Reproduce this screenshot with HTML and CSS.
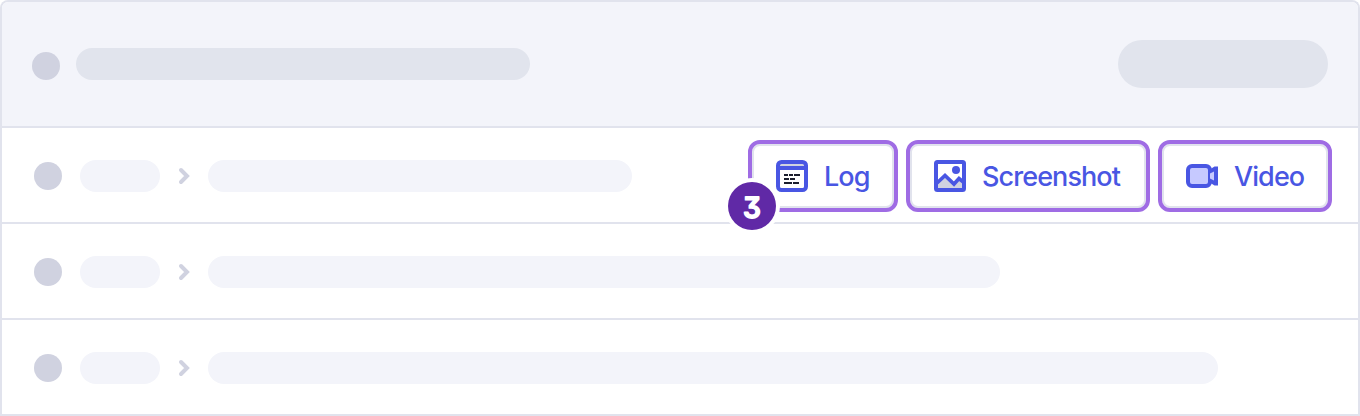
FILE: index.html
```html
<!DOCTYPE html>
<html lang="en">
<head>
<meta charset="utf-8">
<title>Test results</title>
<link rel="stylesheet" href="styles.css">
</head>
<body>
<main class="panel">
  <header class="panel-header">
    <span class="dot"></span>
    <span class="bar bar-title"></span>
    <span class="bar bar-action"></span>
  </header>
  <section class="row">
    <span class="dot"></span>
    <span class="bar tag"></span>
    <svg class="chevron" width="12" height="18" viewBox="0 0 12 18"><path d="M3 3l6 6-6 6"/></svg>
    <span class="bar name-1"></span>
    <div class="actions">
      <button class="action action-log">
        <svg width="32" height="32" viewBox="0 0 32 32">
          <rect x="2" y="2" width="28" height="28" rx="3" fill="#fff"/>
          <path fill="#d0d2e0" d="M4 4h24v2H4z"/>
          <path fill="#4956e3" d="M4 6h24v4H4z"/>
          <rect x="2" y="2" width="28" height="28" rx="3.500" fill="none" stroke="#4956e3" stroke-width="4"/>
          <path d="M8 15h4m1 0h4m1 0h6M8 19h5m1 0h5M8 23h8m1 0h6" fill="none" stroke="#1b1e2e" stroke-width="2"/>
        </svg>
        <span class="label">Log</span>
        <svg class="badge" width="48" height="48" viewBox="0 0 48 48"><text x="24" y="35.500">3</text></svg>
      </button>
      <button class="action action-screenshot">
        <svg width="32" height="32" viewBox="0 0 32 32">
          <path d="M4 23l7-6.500 9 8.500 5-5 3 2v6H4z" fill="#d0d2e0"/>
          <path d="M3 23l8-7.500 9 8.500 5-5.500 5 4" fill="none" stroke="#4956e3" stroke-width="3.700"/>
          <circle cx="22" cy="10" r="4" fill="#4956e3"/>
          <rect x="2" y="2" width="28" height="28" rx="1.500" fill="none" stroke="#4956e3" stroke-width="4"/>
        </svg>
        <span class="label">Screenshot</span>
      </button>
      <button class="action action-video">
        <svg width="32" height="32" viewBox="0 0 32 32">
          <rect x="2" y="6" width="22" height="20" rx="4" fill="#c6c9ff" stroke="#4956e3" stroke-width="4"/>
          <path d="M23 10l5.500-3.500h3.500v19h-3.500L23 22z" fill="#4956e3"/>
          <path d="M24 13.500l4-2v9l-4-2z" fill="#c6c9ff"/>
        </svg>
        <span class="label">Video</span>
      </button>
    </div>
  </section>
  <section class="row">
    <span class="dot"></span>
    <span class="bar tag"></span>
    <svg class="chevron" width="12" height="18" viewBox="0 0 12 18"><path d="M3 3l6 6-6 6"/></svg>
    <span class="bar name-2"></span>
  </section>
  <section class="row">
    <span class="dot"></span>
    <span class="bar tag"></span>
    <svg class="chevron" width="12" height="18" viewBox="0 0 12 18"><path d="M3 3l6 6-6 6"/></svg>
    <span class="bar name-3"></span>
  </section>
</main>
</body>
</html>
```
FILE: styles.css
```css
* { box-sizing: border-box; }
body { margin: 0; background: #fff; font-family: Inter, "Liberation Sans", sans-serif; }
.panel {
  width: 1360px;
  height: 416px;
  border: 2px solid #e1e3ed;
  border-bottom: 0;
  border-radius: 8px 8px 0 0;
}
.panel-header {
  display: flex;
  align-items: center;
  height: 126px;
  padding: 0 30px;
  background: #f3f4fa;
  border-bottom: 2px solid #e1e3ed;
  border-radius: 6px 6px 0 0;
}
.panel-header .dot { margin-top: 4px; }
.row {
  display: flex;
  align-items: center;
  height: 96px;
  padding: 2px 26px 0 32px;
  border-bottom: 2px solid #e1e3ed;
}
.dot { flex: none; width: 28px; height: 28px; border-radius: 50%; background: #d0d2e0; }
.bar { flex: none; height: 32px; border-radius: 16px; background: #f3f4fa; }
.bar-title { width: 454px; margin-left: 16px; background: #e1e4ed; }
.bar-action { width: 210px; height: 48px; margin-left: auto; border-radius: 24px; background: #e1e4ed; }
.tag { width: 80px; margin: 0 18px; }
.chevron {
  flex: none;
  margin-right: 18px;
  fill: none;
  stroke: #d0d2e0;
  stroke-width: 4;
  stroke-linecap: round;
}
.name-1 { width: 424px; }
.name-2 { width: 792px; }
.name-3 { width: 1010px; }
.actions { display: flex; gap: 8px; margin-left: auto; }
.action {
  position: relative;
  display: flex;
  align-items: center;
  height: 72px;
  padding: 0 0 0 24px;
  border: 4px solid #9f6ce4;
  border-radius: 12px;
  background: #fff;
  box-shadow: inset 0 0 0 2px #e1e3ed;
  color: #4956e3;
  font: 500 27px/32px Inter, "Liberation Sans", sans-serif;
  letter-spacing: -0.92px;
}
.action-log { width: 150px; }
.action-screenshot { width: 244px; }
.action-video { width: 174px; }
.action svg { flex: none; }
.label { padding-top: 2px; margin-left: 16px; white-space: nowrap; }
.badge {
  position: absolute;
  left: -24px;
  top: 38px;
  border-radius: 50%;
  background: #6029a6;
  box-shadow: 0 0 0 4px #fff;
}
.badge text {
  fill: #fff;
  stroke: #fff;
  stroke-width: 1.8px;
  stroke-linejoin: round;
  font-size: 28.5px;
  font-weight: 500;
  letter-spacing: 0;
  text-anchor: middle;
  font-feature-settings: "cv09";
}
```
